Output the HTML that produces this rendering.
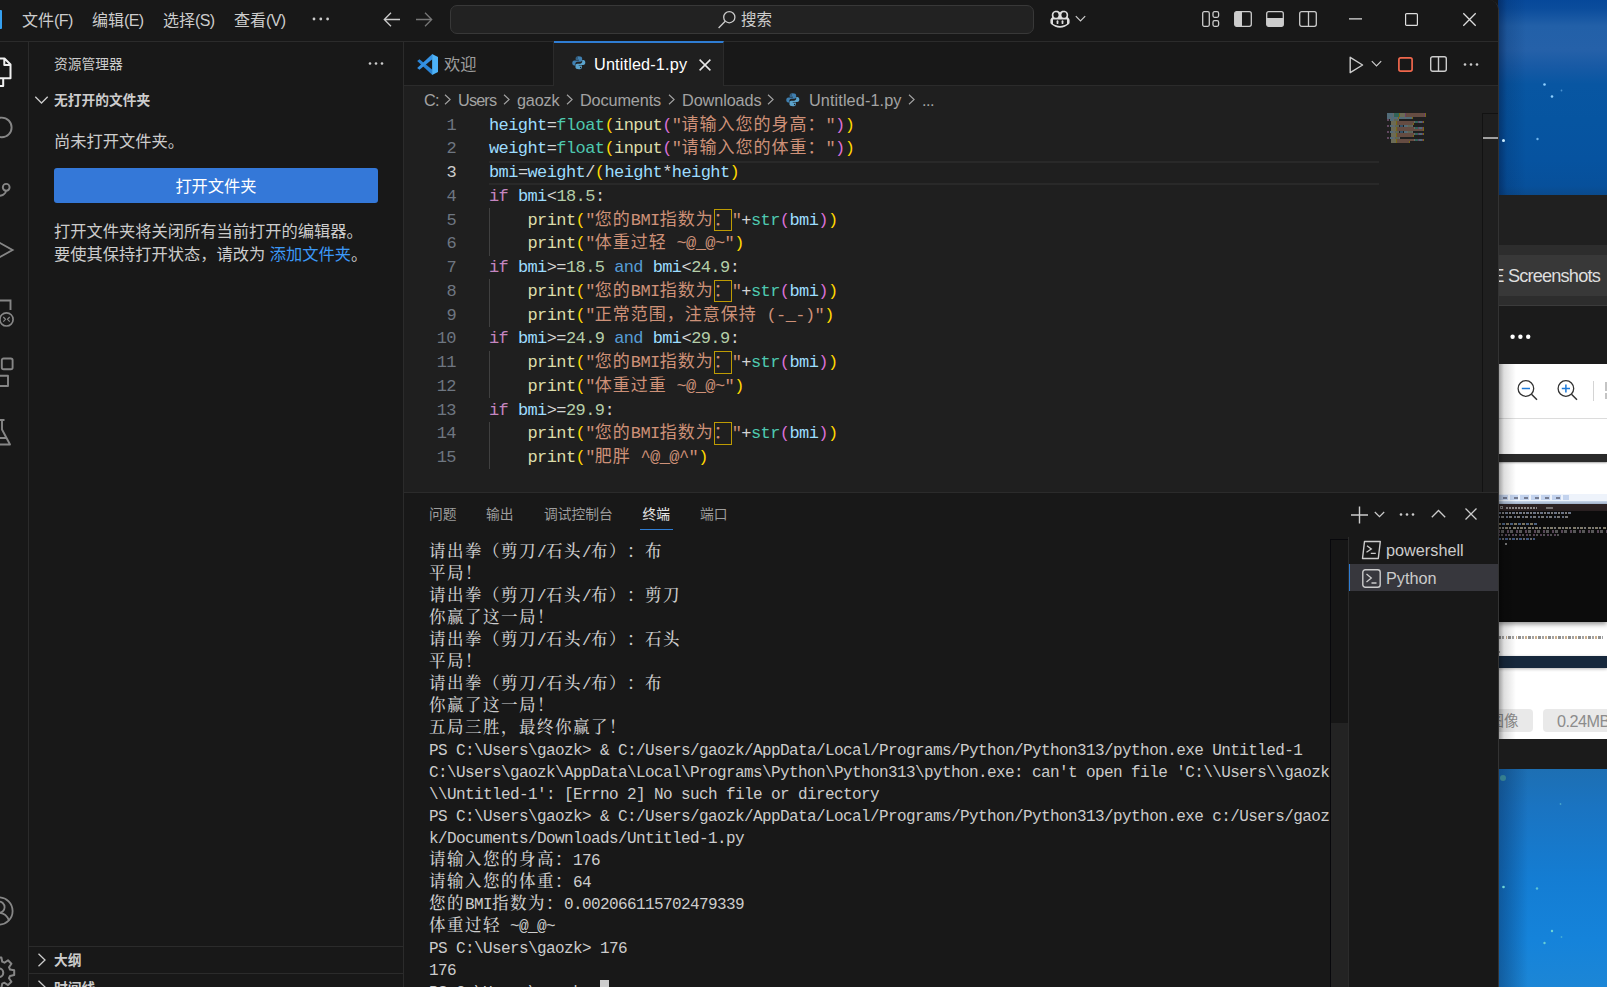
<!DOCTYPE html>
<html lang="zh-CN">
<head>
<meta charset="utf-8">
<title>Untitled-1.py - Visual Studio Code</title>
<style>
*{box-sizing:border-box;margin:0;padding:0}
html,body{width:1607px;height:987px;overflow:hidden;background:#181818}
body{position:relative;font-family:"Liberation Sans","Noto Sans CJK SC",sans-serif;color:#ccc;font-size:16px}
.abs,#win div,#win span.abs,#desk div{position:absolute}
svg{position:absolute;overflow:visible}
/* ---------- desktop / background windows on the right ---------- */
#desk{left:1498px;top:0;width:109px;height:987px;overflow:hidden;background:#0a52a0}
/* ---------- vscode window (page coordinates) ---------- */
#win{left:0;top:0;width:1499px;height:987px;background:#181818;border-top-right-radius:10px;overflow:hidden;border-right:1px solid #333}
#title{left:0;top:0;width:1499px;height:42px;background:#181818;border-bottom:1px solid #2b2b2b}
.menu{top:0;height:41px;line-height:41px;font-size:16px;color:#ccc;white-space:nowrap}
#search{left:450px;top:5px;width:584px;height:29px;border:1px solid #383838;border-radius:7px;background:#222}
#act{left:-31px;top:42px;width:60px;height:960px;background:#181818;border-right:1px solid #2b2b2b}
#side{left:29px;top:42px;width:375px;height:960px;background:#181818;border-right:1px solid #2b2b2b}
#tabs{left:404px;top:42px;width:1095px;height:44px;background:#181818;border-bottom:1px solid #2b2b2b}
#editor{left:404px;top:86px;width:1095px;height:406px;background:#1f1f1f}
#panel{left:404px;top:492px;width:1095px;height:510px;background:#181818;border-top:1px solid #2b2b2b}
.code{font-family:"Liberation Mono","Noto Sans CJK SC",monospace;font-size:17px;letter-spacing:-.58px;line-height:23.75px;white-space:pre;color:#d4d4d4}
.term{font-family:"Liberation Mono","Noto Serif CJK SC",monospace;font-size:16px;letter-spacing:-.6px;line-height:22px;white-space:pre;color:#ccc}
</style>
</head>
<body>
<div id="desk" class="abs">
<!--DESK_BEGIN-->
  <!-- desk is at page x=1498,y=0 (width 109) -->
  <div style="left:0;top:0;width:109px;height:195px;background:linear-gradient(180deg,#06489a 0,#0a4c9c 8px,#2260a8 26px,#2561a9 50px,#185aa5 66px,#0856a2 84px,#0655a1 120px,#0653a0 160px,#07509b 186px,#0a4a8c 195px)"></div>
  <div style="left:0;top:0;width:28px;height:195px;background:linear-gradient(90deg,rgba(3,30,75,.6),rgba(4,40,90,.22) 9px,rgba(4,40,90,0))"></div>
  <svg style="left:0;top:0" width="109" height="195" viewBox="0 0 109 195"><g fill="#8fd0ff"><circle cx="46.500" cy="84.500" r="1.300"/><circle cx="54" cy="96.500" r="1.300"/><circle cx="63.500" cy="90.500" r=".9" opacity=".5"/><circle cx="39.500" cy="139" r="1.200" opacity=".8"/><circle cx="5.500" cy="140.500" r="1.500" fill="#c8ecff"/></g></svg>
  <!-- dark app window (photos) -->
  <div style="left:0;top:195px;width:109px;height:50px;background:#202020"></div>
  <div style="left:0;top:245px;width:109px;height:61px;background:#2d2d2d;border-bottom:1px solid #3b3b3b"></div>
  <div style="left:0;top:254.500px;width:109px;height:41.500px;background:#383838"></div>
  <div style="left:-5.800px;top:254.500px;height:41.500px;line-height:42.500px;font-size:18.200px;letter-spacing:-.75px;color:#dedede;white-space:nowrap">E&nbsp;<span style="letter-spacing:-.82px">Screenshots</span></div>
  <div style="left:0;top:306px;width:109px;height:58px;background:#1b1b1b"></div>
  <svg style="left:12px;top:333.500px" width="22" height="6" viewBox="0 0 22 6"><circle cx="2.600" cy="2.800" r="2.200" fill="#fff"/><circle cx="10.400" cy="2.800" r="2.200" fill="#fff"/><circle cx="18.200" cy="2.800" r="2.200" fill="#fff"/></svg>
  <!-- white viewer -->
  <div style="left:0;top:364px;width:109px;height:375px;background:#fff"></div>
  <svg style="left:18px;top:379px" width="24" height="24" viewBox="0 0 24 24"><circle cx="9.900" cy="9.500" r="7.800" fill="none" stroke="#333" stroke-width="1.300"/><path d="M15.500 15.200L21 20.700" stroke="#333" stroke-width="1.500"/><path d="M5.800 9.500H14" stroke="#1a78d8" stroke-width="1.500"/></svg>
  <svg style="left:58px;top:379px" width="24" height="24" viewBox="0 0 24 24"><circle cx="9.900" cy="9.500" r="7.800" fill="none" stroke="#333" stroke-width="1.300"/><path d="M15.500 15.200L21 20.700" stroke="#333" stroke-width="1.500"/><path d="M5.800 9.500H14M9.900 5.400V13.600" stroke="#1a78d8" stroke-width="1.500"/></svg>
  <div style="left:95px;top:381px;width:1px;height:20px;background:#d4d4d4"></div>
  <div style="left:107px;top:382px;width:2px;height:9px;background:#c4c4c4"></div><div style="left:107px;top:393px;width:2px;height:6px;background:#c4c4c4"></div>
  <div style="left:0;top:418px;width:109px;height:1px;background:#dcdcdc"></div>
  <div style="left:0;top:454px;width:109px;height:7.500px;background:#2a2a2a;box-shadow:0 1px 2px rgba(0,0,0,.35)"></div>
  <!-- embedded screenshot preview -->
  <div style="left:0;top:494px;width:109px;height:6.500px;background:#eef3fb"></div>
  <div style="left:0;top:500.500px;width:109px;height:3.500px;background:linear-gradient(180deg,#c9d6ea,#9fb0c8)"></div>
  <div style="left:0;top:504px;width:109px;height:7px;background:#2c2223"></div>
  <div style="left:0;top:510.500px;width:109px;height:111px;background:#0c0c0c;box-shadow:0 2px 5px rgba(0,0,0,.45)"></div>
<style>.tt{left:0;height:2.500px;opacity:.55}</style>
  <!-- tiny details of the embedded preview -->
  <div style="left:1px;top:494.500px;width:70px;height:5.500px;background:repeating-linear-gradient(90deg,#c3d3ee 0,#c3d3ee 8.600px,#eef3fb 8.600px,#eef3fb 10.600px)"></div>
  <div style="left:3px;top:496.500px;width:66px;height:2px;opacity:.55;background:repeating-linear-gradient(90deg,rgba(0,0,0,0) 0,rgba(0,0,0,0) 2px,#334 2px,#334 6px,rgba(0,0,0,0) 6px,rgba(0,0,0,0) 10.600px)"></div>
  <div style="left:2px;top:505.500px;width:3px;height:3.500px;border:1px solid #999;opacity:.8"></div>
  <div style="left:8px;top:506.500px;width:31px;height:2px;opacity:.55;background:repeating-linear-gradient(90deg,#ddd 0,#ddd 2px,rgba(0,0,0,0) 2px,rgba(0,0,0,0) 3px)"></div>
  <div style="left:48px;top:506.500px;width:7px;height:2px;opacity:.45;background:#ccc"></div>
  <div class="tt" style="top:511.500px;width:74px;background:repeating-linear-gradient(90deg,#b9c8e8 0,#b9c8e8 3px,rgba(0,0,0,0) 3px,rgba(0,0,0,0) 4px,#d8d8d8 4px,#d8d8d8 6px,rgba(0,0,0,0) 6px,rgba(0,0,0,0) 7px)"></div>
  <div class="tt" style="top:515.500px;width:72px;background:repeating-linear-gradient(90deg,#aab8d8 0,#aab8d8 2px,rgba(0,0,0,0) 2px,rgba(0,0,0,0) 3.500px,#ccc 3.500px,#ccc 6px,rgba(0,0,0,0) 6px,rgba(0,0,0,0) 8px)"></div>
  <div class="tt" style="top:522.500px;width:39px;background:repeating-linear-gradient(90deg,#d8c9a0 0,#d8c9a0 3px,rgba(0,0,0,0) 3px,rgba(0,0,0,0) 4px,#7fa6e0 4px,#7fa6e0 7px,rgba(0,0,0,0) 7px,rgba(0,0,0,0) 8px)"></div>
  <div class="tt" style="top:526.500px;width:109px;background:repeating-linear-gradient(90deg,#e0d6b8 0,#e0d6b8 3px,rgba(0,0,0,0) 3px,rgba(0,0,0,0) 4px,#d0d0d0 4px,#d0d0d0 6px,rgba(0,0,0,0) 6px,rgba(0,0,0,0) 7.500px)"></div>
  <div class="tt" style="top:530px;width:109px;opacity:.4;background:repeating-linear-gradient(90deg,#c8a0c8 0,#c8a0c8 2px,rgba(0,0,0,0) 2px,rgba(0,0,0,0) 3px,#c8c8c8 3px,#c8c8c8 6px,rgba(0,0,0,0) 6px,rgba(0,0,0,0) 9px)"></div>
  <div class="tt" style="top:533.500px;width:61px;opacity:.4;background:repeating-linear-gradient(90deg,#c090c0 0,#c090c0 2px,rgba(0,0,0,0) 2px,rgba(0,0,0,0) 3px,#bbb 3px,#bbb 5px,rgba(0,0,0,0) 5px,rgba(0,0,0,0) 7px)"></div>
  <div class="tt" style="top:537.500px;width:37px;background:repeating-linear-gradient(90deg,#6a94dc 0,#6a94dc 3px,rgba(0,0,0,0) 3px,rgba(0,0,0,0) 4px,#b0b0b0 4px,#b0b0b0 6px,rgba(0,0,0,0) 6px,rgba(0,0,0,0) 7px)"></div>
  <div style="left:7px;top:542.500px;width:2px;height:2px;background:#aaa;opacity:.7"></div>
  <div class="tt" style="top:636px;width:105px;height:3px;opacity:.6;background:repeating-linear-gradient(90deg,#444 0,#444 3px,rgba(0,0,0,0) 3px,rgba(0,0,0,0) 4px,#666 4px,#666 6px,rgba(0,0,0,0) 6px,rgba(0,0,0,0) 7.500px,#a87840 7.500px,#a87840 9px,rgba(0,0,0,0) 9px,rgba(0,0,0,0) 10px)"></div>
  <div style="left:0;top:651px;width:2px;height:2px;background:#777;opacity:.7"></div>
  <div style="left:0;top:656px;width:109px;height:12px;background:#16283c;box-shadow:0 1px 3px rgba(0,0,0,.3)"></div>
  <div style="left:-20px;top:708.500px;width:55px;height:23.500px;border-radius:4px;background:#e9e9e9"></div>
  <div style="left:-8.500px;top:708.500px;height:23.500px;line-height:24px;font-size:14.500px;color:#8a8a8a;white-space:nowrap">图像</div>
  <div style="left:45px;top:708.500px;width:90px;height:23.500px;border-radius:4px;background:#e9e9e9"></div>
  <div style="left:59px;top:708.500px;height:23.500px;line-height:24.500px;font-size:16.200px;letter-spacing:-.5px;color:#8c8c8c;white-space:nowrap">0.24MB</div>
  <!-- left shadow of vscode window over the white area -->
  <div style="left:0;top:364px;width:18px;height:375px;background:linear-gradient(90deg,rgba(0,0,0,.42),rgba(0,0,0,.13) 6px,rgba(0,0,0,0) 18px)"></div>
  <div style="left:0;top:739px;width:109px;height:30px;background:#1b1b1b"></div>
  <!-- wallpaper bottom -->
  <div style="left:0;top:769px;width:109px;height:218px;background:linear-gradient(180deg,#1d6fb3 0,#1a74c2 40px,#147dd3 110px,#1583da 170px,#1c86d6 218px)"></div>
  <div style="left:0;top:769px;width:30px;height:218px;background:linear-gradient(90deg,rgba(8,50,100,.5),rgba(8,50,100,0))"></div>
  <svg style="left:0;top:769px" width="109" height="218" viewBox="0 0 109 218"><g fill="#6fd6d6"><circle cx="5.500" cy="118" r="1.300"/><circle cx="39" cy="119.500" r="1.200" opacity=".8"/><circle cx="54" cy="162" r="1.200"/><circle cx="46.500" cy="174" r="1.200" opacity=".9"/><circle cx="63.500" cy="168" r=".9" opacity=".5"/><circle cx="62.500" cy="35" r=".9" opacity=".5"/><circle cx="5" cy="9" r="3" fill="#4c9a8a" opacity=".6"/></g></svg>
<!--DESK_END-->
</div>
<div id="win" class="abs">
  <div id="title">
<!--TITLE_BEGIN-->
    <div style="left:0;top:10px;width:2px;height:19px;background:#35a0f0;border-radius:0 1px 1px 0"></div>
    <div class="menu" style="left:22px">文件<span style="letter-spacing:-.6px">(F)</span></div>
    <div class="menu" style="left:92px">编辑<span style="letter-spacing:-.6px">(E)</span></div>
    <div class="menu" style="left:163px">选择<span style="letter-spacing:-.6px">(S)</span></div>
    <div class="menu" style="left:234px">查看<span style="letter-spacing:-.6px">(V)</span></div>
    <svg style="left:311px;top:16px" width="20" height="6" viewBox="0 0 20 6"><circle cx="3" cy="3" r="1.4" fill="#ccc"/><circle cx="9.8" cy="3" r="1.4" fill="#ccc"/><circle cx="16.6" cy="3" r="1.4" fill="#ccc"/></svg>
    <svg style="left:383px;top:11px" width="18" height="17" viewBox="0 0 18 17"><path d="M17 8.5H1.5M8 1.8L1.3 8.5L8 15.2" fill="none" stroke="#ccc" stroke-width="1.3"/></svg>
    <svg style="left:415px;top:11px" width="18" height="17" viewBox="0 0 18 17"><path d="M1 8.5H16.5M10 1.8L16.7 8.5L10 15.2" fill="none" stroke="#777" stroke-width="1.3"/></svg>
    <div id="search">
      <svg style="left:266px;top:4px" width="20" height="20" viewBox="0 0 20 20"><circle cx="12.3" cy="7.2" r="5.6" fill="none" stroke="#ccc" stroke-width="1.3"/><path d="M8.2 11.3L1.6 18" stroke="#ccc" stroke-width="1.3" fill="none"/></svg>
      <div style="left:290px;top:0;height:27px;line-height:27px;font-size:15.5px;color:#ccc;white-space:nowrap">搜索</div>
    </div>
    <!-- copilot -->
    <svg style="left:1049px;top:9px" width="22" height="20" viewBox="0 0 22 20">
      <path d="M3.2 8.2C2.2 5.6 3 2.6 6.2 1.8c2.2-.5 3.9.1 4.8 1.5.9-1.4 2.600-2 4.800-1.500 3.200.8 4 3.800 3 6.400 1.100.8 1.800 1.900 1.800 3.300v2c0 .7-.3 1.300-.9 1.800-2.300 1.900-5.300 3.400-8.700 3.400s-6.400-1.500-8.700-3.400c-.6-.5-.9-1.100-.9-1.800v-2c0-1.400.7-2.500 1.800-3.300z" fill="#ddd"/>
      <rect x="4.500" y="3.200" width="5" height="5.600" rx="2.200" fill="#181818"/><rect x="12.500" y="3.200" width="5" height="5.600" rx="2.200" fill="#181818"/>
      <path d="M4 10.500h14v4.200c-2 1.400-4.300 2.200-7 2.200s-5-.8-7-2.200z" fill="#181818"/>
      <rect x="7.600" y="11.300" width="1.800" height="3.800" rx=".9" fill="#ddd"/><rect x="12.600" y="11.300" width="1.800" height="3.800" rx=".9" fill="#ddd"/>
    </svg>
    <svg style="left:1075px;top:15px" width="11" height="8" viewBox="0 0 11 8"><path d="M.8 1.200L5.500 6L10.200 1.200" fill="none" stroke="#ccc" stroke-width="1.200"/></svg>
    <!-- layout icons -->
    <svg style="left:1202px;top:11px" width="18" height="17" viewBox="0 0 18 17"><rect x=".7" y=".7" width="6.600" height="14.600" rx="1.500" fill="none" stroke="#ccc" stroke-width="1.300"/><rect x="11" y=".7" width="5.600" height="5.600" rx="1.500" fill="none" stroke="#ccc" stroke-width="1.300"/><rect x="11" y="9.700" width="5.600" height="5.600" rx="1.500" fill="none" stroke="#ccc" stroke-width="1.300"/></svg>
    <svg style="left:1234px;top:11px" width="18" height="17" viewBox="0 0 18 17"><rect x=".7" y=".7" width="16.600" height="14.600" rx="2" fill="none" stroke="#ccc" stroke-width="1.300"/><path d="M.7 2.500a1.800 1.800 0 0 1 1.800-1.800H8v14.600H2.500a1.800 1.800 0 0 1-1.800-1.800z" fill="#ccc"/></svg>
    <svg style="left:1266px;top:11px" width="18" height="17" viewBox="0 0 18 17"><rect x=".7" y=".7" width="16.600" height="14.600" rx="2" fill="none" stroke="#ccc" stroke-width="1.300"/><path d="M.7 7h16.600v6.500a1.800 1.800 0 0 1-1.800 1.800H2.500a1.800 1.800 0 0 1-1.800-1.800z" fill="#ccc"/></svg>
    <svg style="left:1299px;top:11px" width="18" height="17" viewBox="0 0 18 17"><rect x=".7" y=".7" width="16.600" height="14.600" rx="2" fill="none" stroke="#ccc" stroke-width="1.300"/><path d="M9.500 .7v14.600" stroke="#ccc" stroke-width="1.300"/></svg>
    <!-- window controls -->
    <svg style="left:1349px;top:18px" width="13" height="2" viewBox="0 0 13 2"><path d="M0 .8H13" stroke="#ddd" stroke-width="1.200"/></svg>
    <svg style="left:1405px;top:13px" width="13" height="13" viewBox="0 0 13 13"><rect x=".6" y=".6" width="11.800" height="11.800" rx="1" fill="none" stroke="#ddd" stroke-width="1.200"/></svg>
    <svg style="left:1463px;top:13px" width="13" height="13" viewBox="0 0 13 13"><path d="M.3 .3L12.700 12.700M12.700 .3L.3 12.700" stroke="#ddd" stroke-width="1.300"/></svg>
<!--TITLE_END-->
  </div>
  <div id="act">
<!--ACT_BEGIN-->
    <!-- act is at page x=-31,y=42 ; icon centre x = page -1 => local 30 -->
    <!-- files (active) -->
    <svg style="left:15px;top:15px" width="30" height="30" viewBox="0 0 30 30"><path d="M11 1.500h9.500l6 6V21.300H11z M20.300 1.500V8h6.200" fill="none" stroke="#f0f0f0" stroke-width="2" stroke-linejoin="round"/><path d="M11 9H4.500v20h14.700v-7.700" fill="none" stroke="#f0f0f0" stroke-width="2" stroke-linejoin="round"/></svg>
    <!-- search -->
    <svg style="left:15px;top:75px" width="30" height="30" viewBox="0 0 30 30"><circle cx="17.800" cy="10.400" r="9.800" fill="none" stroke="#868686" stroke-width="1.900"/><path d="M10.800 17.500L2 26.500" stroke="#868686" stroke-width="1.900"/></svg>
    <!-- source control -->
    <svg style="left:15px;top:135px" width="30" height="30" viewBox="0 0 30 30"><circle cx="22.200" cy="10.300" r="3.400" fill="none" stroke="#868686" stroke-width="1.900"/><circle cx="8" cy="5.500" r="3.400" fill="none" stroke="#868686" stroke-width="1.900"/><circle cx="8" cy="24.500" r="3.400" fill="none" stroke="#868686" stroke-width="1.900"/><path d="M8 9v12M22 13.700c0 4.500-6 5-14 7.500" fill="none" stroke="#868686" stroke-width="1.900"/></svg>
    <!-- run and debug -->
    <svg style="left:15px;top:195px" width="30" height="30" viewBox="0 0 30 30"><path d="M11.500 3.500L28.500 13L11.500 22.500" fill="none" stroke="#868686" stroke-width="1.900"/><circle cx="8" cy="21" r="5" fill="none" stroke="#868686" stroke-width="1.900"/></svg>
    <!-- remote explorer -->
    <svg style="left:15px;top:255px" width="30" height="30" viewBox="0 0 30 30"><path d="M3 21V3.500h23.500V13" fill="none" stroke="#868686" stroke-width="1.900"/><circle cx="22.500" cy="22.400" r="6.600" fill="none" stroke="#868686" stroke-width="1.700"/><path d="M19.300 20l2.200 2.300l-2.200 2.300M25.700 20l-2.200 2.300l2.200 2.300" fill="none" stroke="#868686" stroke-width="1.200"/></svg>
    <!-- extensions -->
    <svg style="left:15px;top:315px" width="30" height="30" viewBox="0 0 30 30"><rect x="17.800" y="1.500" width="10.800" height="10.800" rx="1.800" fill="none" stroke="#868686" stroke-width="1.900"/><path d="M13 6.500H3.500v11.200M13 17.700H3.500v11.300H24V18.700H13z" fill="none" stroke="#868686" stroke-width="1.900" stroke-linejoin="round"/></svg>
    <!-- testing -->
    <svg style="left:15px;top:375px" width="30" height="30" viewBox="0 0 30 30"><path d="M9.500 3h11M12 3v9.500L4 27.500h22L18 12.500V3M7.500 21h15" fill="none" stroke="#868686" stroke-width="1.900" stroke-linejoin="round"/></svg>
    <!-- account -->
    <svg style="left:15px;top:854px" width="30" height="30" viewBox="0 0 30 30"><circle cx="15" cy="15" r="13.600" fill="none" stroke="#868686" stroke-width="1.800"/><circle cx="15" cy="11.200" r="5.600" fill="none" stroke="#868686" stroke-width="1.800"/><path d="M5 24.500c2-5 5.500-7.600 10-7.600s8 2.600 10 7.600" fill="none" stroke="#868686" stroke-width="1.800"/></svg>
    <!-- gear -->
    <svg style="left:15px;top:914px" width="30" height="30" viewBox="0 0 30 30"><g fill="none" stroke="#868686" stroke-width="2" stroke-linejoin="round"><path d="M12.600 1.500h4.800l.8 4.200 2.300 1 3.500-2.400 3.400 3.400-2.400 3.500 1 2.300 4.200.8v4.800l-4.200.8-1 2.300 2.400 3.500-3.400 3.400-3.500-2.400-2.300 1-.8 4.200h-4.800l-.8-4.200-2.300-1-3.500 2.400-3.400-3.400 2.400-3.500-1-2.300-4.200-.8v-4.800l4.200-.8 1-2.300L2.600 7.700l3.400-3.400 3.500 2.400 2.300-1z"/><circle cx="15" cy="16.700" r="4.300"/></g></svg>
<!--ACT_END-->
  </div>
  <div id="side">
<!--SIDE_BEGIN-->
    <!-- side is at page x=29,y=42 -->
    <div style="left:25px;top:12px;height:22px;line-height:22px;font-size:13.75px;color:#ccc;white-space:nowrap">资源管理器</div>
    <svg style="left:339px;top:19px" width="16" height="5" viewBox="0 0 16 5"><circle cx="2" cy="2.500" r="1.300" fill="#ccc"/><circle cx="8" cy="2.500" r="1.300" fill="#ccc"/><circle cx="14" cy="2.500" r="1.300" fill="#ccc"/></svg>
    <svg style="left:5px;top:53px" width="15" height="10" viewBox="0 0 15 10"><path d="M1.300 1.700L7.500 8L13.700 1.700" fill="none" stroke="#ccc" stroke-width="1.300"/></svg>
    <div style="left:25px;top:47.800px;height:22px;line-height:22px;font-size:13.75px;font-weight:bold;color:#ccc;white-space:nowrap">无打开的文件夹</div>
    <div style="left:25px;top:88px;height:23px;line-height:23px;font-size:16.25px;color:#ccc;white-space:nowrap">尚未打开文件夹。</div>
    <div style="left:25px;top:126px;width:324px;height:35px;line-height:36.500px;background:#3478d8;border-radius:3px;color:#fff;font-size:16.25px;text-align:center">打开文件夹</div>
    <div style="left:25px;top:178px;width:340px;line-height:23.2px;font-size:16.25px;color:#ccc;white-space:nowrap">打开文件夹将关闭所有当前打开的编辑器。<br>要使其保持打开状态，请改为 <span style="color:#3c98f7">添加文件夹</span>。</div>
    <!-- collapsed panes -->
    <div style="left:0;top:904px;width:374px;height:1px;background:#2b2b2b"></div>
    <svg style="left:8px;top:911px" width="10" height="14" viewBox="0 0 10 14"><path d="M1.500 .8L8 7L1.500 13.200" fill="none" stroke="#ccc" stroke-width="1.300"/></svg>
    <div style="left:25px;top:908px;height:22px;line-height:22px;font-size:13.75px;font-weight:bold;color:#ccc;white-space:nowrap">大纲</div>
    <div style="left:0;top:931px;width:374px;height:1px;background:#2b2b2b"></div>
    <svg style="left:8px;top:938px" width="10" height="14" viewBox="0 0 10 14"><path d="M1.500 .8L8 7L1.500 13.200" fill="none" stroke="#ccc" stroke-width="1.300"/></svg>
    <div style="left:25px;top:935.500px;height:22px;line-height:22px;font-size:13.75px;font-weight:bold;color:#ccc;white-space:nowrap">时间线</div>
<!--SIDE_END-->
  </div>
  <div id="tabs">
<!--TABS_BEGIN-->
    <!-- tabs is at page x=404,y=42 -->
    <div style="left:0;top:0;width:150px;height:43px;border-right:1px solid #2b2b2b"></div>
    <svg style="left:12.700px;top:11.900px" width="21" height="21" viewBox="0 0 20.400 20.200"><polygon points="0.200,6.700 2.400,4.900 14.900,15.300 14.900,20.200" fill="#2a84d6"/><polygon points="0.200,13.500 2.400,15.300 14.900,4.900 14.900,0" fill="#3592e4"/><polygon points="14.700,0 20.400,2.700 20.400,17.500 14.700,20.200" fill="#4db2f8"/></svg>
    <div style="left:40px;top:0;height:43px;line-height:45px;font-size:16.250px;color:#9d9d9d;white-space:nowrap">欢迎</div>
    <div style="left:150px;top:-1px;width:170px;height:45px;background:#1f1f1f;border-top:2px solid #2f7dd3;border-right:1px solid #2b2b2b"></div>
    <!-- python file icon -->
    <svg style="left:167.600px;top:14px" width="13.600" height="13.400" viewBox="0 0 16 16"><path d="M7.900 .3C5.600 .3 4.300 1.100 4.300 2.700v1.900h3.800v.7H2.700C1.100 5.300 .2 6.500 .2 8.300s.9 3 2.300 3h1.400V9.400c0-1.500 1.200-2.600 2.700-2.600h3.300c1.200 0 2.100-.9 2.100-2.100V2.700c0-1.500-1.400-2.400-4.100-2.400zM5.900 1.500c.5 0 .8.400.8.800s-.3.800-.8.800-.8-.4-.8-.8.300-.8.800-.8z" fill="#3f7fb0"/><path d="M8.100 15.700c2.300 0 3.600-.8 3.600-2.400v-1.900H7.900v-.7h5.400c1.600 0 2.500-1.200 2.500-3s-.9-3-2.300-3h-1.400v1.900c0 1.500-1.200 2.600-2.700 2.600H6.100c-1.200 0-2.100.9-2.100 2.100v2c0 1.500 1.400 2.400 4.100 2.400zm2-1.200c-.5 0-.8-.4-.8-.8s.3-.8.800-.8.800.4.800.8-.3.800-.8.800z" fill="#5ba3cc"/></svg>
    <div style="left:190px;top:0;height:44px;line-height:45px;font-size:16.250px;letter-spacing:.15px;color:#fff;white-space:nowrap">Untitled-1.py</div>
    <svg style="left:295px;top:16.500px" width="12" height="12" viewBox="0 0 12 12"><path d="M.6 .6L11.400 11.400M11.400 .6L.6 11.400" stroke="#e8e8e8" stroke-width="1.500"/></svg>
    <!-- editor actions -->
    <svg style="left:945px;top:13.500px" width="15" height="18" viewBox="0 0 15 18"><path d="M1.200 1.300L13.600 9L1.200 16.700z" fill="none" stroke="#ccc" stroke-width="1.400" stroke-linejoin="round"/></svg>
    <svg style="left:967px;top:18px" width="11" height="8" viewBox="0 0 11 8"><path d="M.8 1.200L5.500 6L10.200 1.200" fill="none" stroke="#ccc" stroke-width="1.200"/></svg>
    <svg style="left:994px;top:14.500px" width="15" height="15" viewBox="0 0 15 15"><rect x=".9" y=".9" width="13.200" height="13.200" rx="1.800" fill="none" stroke="#f0674c" stroke-width="1.700"/></svg>
    <svg style="left:1026px;top:13.500px" width="17" height="16" viewBox="0 0 17 16"><rect x=".7" y=".7" width="15.600" height="14.600" rx="2" fill="none" stroke="#ccc" stroke-width="1.400"/><path d="M8.500 .7v14.600" stroke="#ccc" stroke-width="1.400"/></svg>
    <svg style="left:1059px;top:19.500px" width="16" height="5" viewBox="0 0 16 5"><circle cx="2" cy="2.500" r="1.300" fill="#ccc"/><circle cx="8" cy="2.500" r="1.300" fill="#ccc"/><circle cx="14" cy="2.500" r="1.300" fill="#ccc"/></svg>
<!--TABS_END-->
  </div>
  <div id="editor">
<!--EDITOR_BEGIN-->
    <style>.c{font-family:"Noto Sans CJK SC",sans-serif;font-size:17px;letter-spacing:1px;line-height:0;text-spacing-trim:space-all;font-kerning:none;font-feature-settings:"halt" 0,"palt" 0,"kern" 0}.ln{left:0;width:52px;text-align:right;color:#6e7681;height:23.75px;margin-top:.7px}.cl{left:85px;height:23.75px;margin-top:.7px}.box{left:309.7px;width:18px;height:22.5px;border:1px solid #bd9b03}.ig{width:1px;background:#404040;left:85px}#mm i{position:absolute;height:2px;display:block}</style>
    <style>.bc{top:0;height:27px;line-height:28.5px;font-size:16.250px;color:#a3a3a3;white-space:nowrap}.bcs{top:8.300px}</style>
    <div class="bc" style="left:20px;letter-spacing:-.8px">C:</div>
    <svg class="bcs" style="left:39.7px" width="7.500" height="11" viewBox="0 0 8 12"><path d="M1 .8L6.600 6L1 11.200" fill="none" stroke="#a3a3a3" stroke-width="1.200"/></svg>
    <div class="bc" style="left:54px;letter-spacing:-.85px">Users</div>
    <svg class="bcs" style="left:98.7px" width="7.500" height="11" viewBox="0 0 8 12"><path d="M1 .8L6.600 6L1 11.200" fill="none" stroke="#a3a3a3" stroke-width="1.200"/></svg>
    <div class="bc" style="left:113px;letter-spacing:-.2px">gaozk</div>
    <svg class="bcs" style="left:161.7px" width="7.500" height="11" viewBox="0 0 8 12"><path d="M1 .8L6.600 6L1 11.200" fill="none" stroke="#a3a3a3" stroke-width="1.200"/></svg>
    <div class="bc" style="left:176px;letter-spacing:-.13px">Documents</div>
    <svg class="bcs" style="left:263.7px" width="7.500" height="11" viewBox="0 0 8 12"><path d="M1 .8L6.600 6L1 11.200" fill="none" stroke="#a3a3a3" stroke-width="1.200"/></svg>
    <div class="bc" style="left:278px;letter-spacing:-.1px">Downloads</div>
    <svg class="bcs" style="left:363.2px" width="7.500" height="11" viewBox="0 0 8 12"><path d="M1 .8L6.600 6L1 11.200" fill="none" stroke="#a3a3a3" stroke-width="1.200"/></svg>
    <svg style="left:382.400px;top:6.500px" width="13.600" height="13.400" viewBox="0 0 16 16"><path d="M7.900 .3C5.600 .3 4.300 1.100 4.300 2.700v1.900h3.800v.7H2.700C1.100 5.300 .2 6.500 .2 8.300s.9 3 2.300 3h1.400V9.400c0-1.500 1.200-2.600 2.700-2.600h3.300c1.200 0 2.100-.9 2.100-2.100V2.700c0-1.500-1.400-2.400-4.100-2.400zM5.900 1.500c.5 0 .8.400.8.800s-.3.800-.8.800-.8-.4-.8-.8.300-.8.800-.8z" fill="#3f7fb0"/><path d="M8.100 15.700c2.300 0 3.600-.8 3.600-2.400v-1.900H7.900v-.7h5.400c1.600 0 2.500-1.200 2.500-3s-.9-3-2.300-3h-1.400v1.900c0 1.500-1.200 2.600-2.700 2.600H6.100c-1.200 0-2.100.9-2.100 2.100v2c0 1.500 1.400 2.400 4.100 2.400zm2-1.200c-.5 0-.8-.4-.8-.8s.3-.8.800-.8.800.4.800.8-.3.800-.8.800z" fill="#5ba3cc"/></svg>
    <div class="bc" style="left:405px;letter-spacing:.1px">Untitled-1.py</div>
    <svg class="bcs" style="left:504.2px" width="7.500" height="11" viewBox="0 0 8 12"><path d="M1 .8L6.600 6L1 11.200" fill="none" stroke="#a3a3a3" stroke-width="1.200"/></svg>
    <div class="bc" style="left:518px;letter-spacing:-.5px">...</div>

    <div style="left:85px;top:75.00px;width:890px;height:23.5px;border-top:2px solid #292929;border-bottom:2px solid #292929"></div>
    <div class="ig" style="top:122.00px;height:47.50px"></div>
    <div class="ig" style="top:193.25px;height:47.50px"></div>
    <div class="ig" style="top:264.50px;height:47.50px"></div>
    <div class="ig" style="top:335.75px;height:47.50px"></div>
    <div class="code ln" style="top:27.00px;color:#6e7681">1</div>
    <div class="code cl" style="top:27.00px"><span style="color:#9cdcfe">height</span><span style="color:#d4d4d4">=</span><span style="color:#4ec9b0">float</span><span style="color:#ffd700">(</span><span style="color:#dcdcaa">input</span><span style="color:#da70d6">(</span><span style="color:#ce9178">"<span class="c">请输入您的身高：</span>"</span><span style="color:#da70d6">)</span><span style="color:#ffd700">)</span></div>
    <div class="code ln" style="top:50.75px;color:#6e7681">2</div>
    <div class="code cl" style="top:50.75px"><span style="color:#9cdcfe">weight</span><span style="color:#d4d4d4">=</span><span style="color:#4ec9b0">float</span><span style="color:#ffd700">(</span><span style="color:#dcdcaa">input</span><span style="color:#da70d6">(</span><span style="color:#ce9178">"<span class="c">请输入您的体重：</span>"</span><span style="color:#da70d6">)</span><span style="color:#ffd700">)</span></div>
    <div class="code ln" style="top:74.50px;color:#ccc">3</div>
    <div class="code cl" style="top:74.50px"><span style="color:#9cdcfe">bmi</span><span style="color:#d4d4d4">=</span><span style="color:#9cdcfe">weight</span><span style="color:#d4d4d4">/</span><span style="color:#ffd700">(</span><span style="color:#9cdcfe">height</span><span style="color:#d4d4d4">*</span><span style="color:#9cdcfe">height</span><span style="color:#ffd700">)</span></div>
    <div class="code ln" style="top:98.25px;color:#6e7681">4</div>
    <div class="code cl" style="top:98.25px"><span style="color:#c586c0">if</span> <span style="color:#9cdcfe">bmi</span><span style="color:#d4d4d4">&lt;</span><span style="color:#b5cea8">18.5</span><span style="color:#d4d4d4">:</span></div>
    <div class="code ln" style="top:122.00px;color:#6e7681">5</div>
    <div class="box" style="top:122.60px"></div>
    <div class="code cl" style="top:122.00px">    <span style="color:#dcdcaa">print</span><span style="color:#ffd700">(</span><span style="color:#ce9178">"<span class="c">您的</span>BMI<span class="c">指数为</span></span><span style="color:#ce9178"><span class="c">：</span></span><span style="color:#ce9178">"</span><span style="color:#d4d4d4">+</span><span style="color:#4ec9b0">str</span><span style="color:#da70d6">(</span><span style="color:#9cdcfe">bmi</span><span style="color:#da70d6">)</span><span style="color:#ffd700">)</span></div>
    <div class="code ln" style="top:145.75px;color:#6e7681">6</div>
    <div class="code cl" style="top:145.75px">    <span style="color:#dcdcaa">print</span><span style="color:#ffd700">(</span><span style="color:#ce9178">"<span class="c">体重过轻</span> ~@_@~"</span><span style="color:#ffd700">)</span></div>
    <div class="code ln" style="top:169.50px;color:#6e7681">7</div>
    <div class="code cl" style="top:169.50px"><span style="color:#c586c0">if</span> <span style="color:#9cdcfe">bmi</span><span style="color:#d4d4d4">&gt;=</span><span style="color:#b5cea8">18.5</span> <span style="color:#569cd6">and</span> <span style="color:#9cdcfe">bmi</span><span style="color:#d4d4d4">&lt;</span><span style="color:#b5cea8">24.9</span><span style="color:#d4d4d4">:</span></div>
    <div class="code ln" style="top:193.25px;color:#6e7681">8</div>
    <div class="box" style="top:193.85px"></div>
    <div class="code cl" style="top:193.25px">    <span style="color:#dcdcaa">print</span><span style="color:#ffd700">(</span><span style="color:#ce9178">"<span class="c">您的</span>BMI<span class="c">指数为</span></span><span style="color:#ce9178"><span class="c">：</span></span><span style="color:#ce9178">"</span><span style="color:#d4d4d4">+</span><span style="color:#4ec9b0">str</span><span style="color:#da70d6">(</span><span style="color:#9cdcfe">bmi</span><span style="color:#da70d6">)</span><span style="color:#ffd700">)</span></div>
    <div class="code ln" style="top:217.00px;color:#6e7681">9</div>
    <div class="code cl" style="top:217.00px">    <span style="color:#dcdcaa">print</span><span style="color:#ffd700">(</span><span style="color:#ce9178">"<span class="c">正常范围，注意保持</span> (-_-)"</span><span style="color:#ffd700">)</span></div>
    <div class="code ln" style="top:240.75px;color:#6e7681">10</div>
    <div class="code cl" style="top:240.75px"><span style="color:#c586c0">if</span> <span style="color:#9cdcfe">bmi</span><span style="color:#d4d4d4">&gt;=</span><span style="color:#b5cea8">24.9</span> <span style="color:#569cd6">and</span> <span style="color:#9cdcfe">bmi</span><span style="color:#d4d4d4">&lt;</span><span style="color:#b5cea8">29.9</span><span style="color:#d4d4d4">:</span></div>
    <div class="code ln" style="top:264.50px;color:#6e7681">11</div>
    <div class="box" style="top:265.10px"></div>
    <div class="code cl" style="top:264.50px">    <span style="color:#dcdcaa">print</span><span style="color:#ffd700">(</span><span style="color:#ce9178">"<span class="c">您的</span>BMI<span class="c">指数为</span></span><span style="color:#ce9178"><span class="c">：</span></span><span style="color:#ce9178">"</span><span style="color:#d4d4d4">+</span><span style="color:#4ec9b0">str</span><span style="color:#da70d6">(</span><span style="color:#9cdcfe">bmi</span><span style="color:#da70d6">)</span><span style="color:#ffd700">)</span></div>
    <div class="code ln" style="top:288.25px;color:#6e7681">12</div>
    <div class="code cl" style="top:288.25px">    <span style="color:#dcdcaa">print</span><span style="color:#ffd700">(</span><span style="color:#ce9178">"<span class="c">体重过重</span> ~@_@~"</span><span style="color:#ffd700">)</span></div>
    <div class="code ln" style="top:312.00px;color:#6e7681">13</div>
    <div class="code cl" style="top:312.00px"><span style="color:#c586c0">if</span> <span style="color:#9cdcfe">bmi</span><span style="color:#d4d4d4">&gt;=</span><span style="color:#b5cea8">29.9</span><span style="color:#d4d4d4">:</span></div>
    <div class="code ln" style="top:335.75px;color:#6e7681">14</div>
    <div class="box" style="top:336.35px"></div>
    <div class="code cl" style="top:335.75px">    <span style="color:#dcdcaa">print</span><span style="color:#ffd700">(</span><span style="color:#ce9178">"<span class="c">您的</span>BMI<span class="c">指数为</span></span><span style="color:#ce9178"><span class="c">：</span></span><span style="color:#ce9178">"</span><span style="color:#d4d4d4">+</span><span style="color:#4ec9b0">str</span><span style="color:#da70d6">(</span><span style="color:#9cdcfe">bmi</span><span style="color:#da70d6">)</span><span style="color:#ffd700">)</span></div>
    <div class="code ln" style="top:359.50px;color:#6e7681">15</div>
    <div class="code cl" style="top:359.50px">    <span style="color:#dcdcaa">print</span><span style="color:#ffd700">(</span><span style="color:#ce9178">"<span class="c">肥胖</span> ^@_@^"</span><span style="color:#ffd700">)</span></div>
    <div id="mm" style="left:982px;top:27px;width:45px;height:30px;opacity:.4"><i style="left:1px;top:0px;width:6px;background:#9cdcfe"></i><i style="left:7px;top:0px;width:1px;background:#d4d4d4"></i><i style="left:8px;top:0px;width:5px;background:#4ec9b0"></i><i style="left:13px;top:0px;width:1px;background:#ffd700"></i><i style="left:14px;top:0px;width:5px;background:#dcdcaa"></i><i style="left:19px;top:0px;width:1px;background:#da70d6"></i><i style="left:20px;top:0px;width:18px;background:#ce9178"></i><i style="left:38px;top:0px;width:1px;background:#da70d6"></i><i style="left:39px;top:0px;width:1px;background:#ffd700"></i><i style="left:1px;top:2px;width:6px;background:#9cdcfe"></i><i style="left:7px;top:2px;width:1px;background:#d4d4d4"></i><i style="left:8px;top:2px;width:5px;background:#4ec9b0"></i><i style="left:13px;top:2px;width:1px;background:#ffd700"></i><i style="left:14px;top:2px;width:5px;background:#dcdcaa"></i><i style="left:19px;top:2px;width:1px;background:#da70d6"></i><i style="left:20px;top:2px;width:18px;background:#ce9178"></i><i style="left:38px;top:2px;width:1px;background:#da70d6"></i><i style="left:39px;top:2px;width:1px;background:#ffd700"></i><i style="left:1px;top:4px;width:3px;background:#9cdcfe"></i><i style="left:4px;top:4px;width:1px;background:#d4d4d4"></i><i style="left:5px;top:4px;width:6px;background:#9cdcfe"></i><i style="left:11px;top:4px;width:1px;background:#d4d4d4"></i><i style="left:12px;top:4px;width:1px;background:#ffd700"></i><i style="left:13px;top:4px;width:6px;background:#9cdcfe"></i><i style="left:19px;top:4px;width:1px;background:#d4d4d4"></i><i style="left:20px;top:4px;width:6px;background:#9cdcfe"></i><i style="left:26px;top:4px;width:1px;background:#ffd700"></i><i style="left:1px;top:6px;width:2px;background:#c586c0"></i><i style="left:4px;top:6px;width:3px;background:#9cdcfe"></i><i style="left:7px;top:6px;width:1px;background:#d4d4d4"></i><i style="left:8px;top:6px;width:4px;background:#b5cea8"></i><i style="left:12px;top:6px;width:1px;background:#d4d4d4"></i><i style="left:5px;top:8px;width:5px;background:#dcdcaa"></i><i style="left:10px;top:8px;width:1px;background:#ffd700"></i><i style="left:11px;top:8px;width:14px;background:#ce9178"></i><i style="left:25px;top:8px;width:2px;background:#ce9178"></i><i style="left:27px;top:8px;width:1px;background:#ce9178"></i><i style="left:28px;top:8px;width:1px;background:#d4d4d4"></i><i style="left:29px;top:8px;width:3px;background:#4ec9b0"></i><i style="left:32px;top:8px;width:1px;background:#da70d6"></i><i style="left:33px;top:8px;width:3px;background:#9cdcfe"></i><i style="left:36px;top:8px;width:1px;background:#da70d6"></i><i style="left:37px;top:8px;width:1px;background:#ffd700"></i><i style="left:5px;top:10px;width:5px;background:#dcdcaa"></i><i style="left:10px;top:10px;width:1px;background:#ffd700"></i><i style="left:11px;top:10px;width:16px;background:#ce9178"></i><i style="left:27px;top:10px;width:1px;background:#ffd700"></i><i style="left:1px;top:12px;width:2px;background:#c586c0"></i><i style="left:4px;top:12px;width:3px;background:#9cdcfe"></i><i style="left:7px;top:12px;width:2px;background:#d4d4d4"></i><i style="left:9px;top:12px;width:4px;background:#b5cea8"></i><i style="left:14px;top:12px;width:3px;background:#569cd6"></i><i style="left:18px;top:12px;width:3px;background:#9cdcfe"></i><i style="left:21px;top:12px;width:1px;background:#d4d4d4"></i><i style="left:22px;top:12px;width:4px;background:#b5cea8"></i><i style="left:26px;top:12px;width:1px;background:#d4d4d4"></i><i style="left:5px;top:14px;width:5px;background:#dcdcaa"></i><i style="left:10px;top:14px;width:1px;background:#ffd700"></i><i style="left:11px;top:14px;width:14px;background:#ce9178"></i><i style="left:25px;top:14px;width:2px;background:#ce9178"></i><i style="left:27px;top:14px;width:1px;background:#ce9178"></i><i style="left:28px;top:14px;width:1px;background:#d4d4d4"></i><i style="left:29px;top:14px;width:3px;background:#4ec9b0"></i><i style="left:32px;top:14px;width:1px;background:#da70d6"></i><i style="left:33px;top:14px;width:3px;background:#9cdcfe"></i><i style="left:36px;top:14px;width:1px;background:#da70d6"></i><i style="left:37px;top:14px;width:1px;background:#ffd700"></i><i style="left:5px;top:16px;width:5px;background:#dcdcaa"></i><i style="left:10px;top:16px;width:1px;background:#ffd700"></i><i style="left:11px;top:16px;width:26px;background:#ce9178"></i><i style="left:37px;top:16px;width:1px;background:#ffd700"></i><i style="left:1px;top:18px;width:2px;background:#c586c0"></i><i style="left:4px;top:18px;width:3px;background:#9cdcfe"></i><i style="left:7px;top:18px;width:2px;background:#d4d4d4"></i><i style="left:9px;top:18px;width:4px;background:#b5cea8"></i><i style="left:14px;top:18px;width:3px;background:#569cd6"></i><i style="left:18px;top:18px;width:3px;background:#9cdcfe"></i><i style="left:21px;top:18px;width:1px;background:#d4d4d4"></i><i style="left:22px;top:18px;width:4px;background:#b5cea8"></i><i style="left:26px;top:18px;width:1px;background:#d4d4d4"></i><i style="left:5px;top:20px;width:5px;background:#dcdcaa"></i><i style="left:10px;top:20px;width:1px;background:#ffd700"></i><i style="left:11px;top:20px;width:14px;background:#ce9178"></i><i style="left:25px;top:20px;width:2px;background:#ce9178"></i><i style="left:27px;top:20px;width:1px;background:#ce9178"></i><i style="left:28px;top:20px;width:1px;background:#d4d4d4"></i><i style="left:29px;top:20px;width:3px;background:#4ec9b0"></i><i style="left:32px;top:20px;width:1px;background:#da70d6"></i><i style="left:33px;top:20px;width:3px;background:#9cdcfe"></i><i style="left:36px;top:20px;width:1px;background:#da70d6"></i><i style="left:37px;top:20px;width:1px;background:#ffd700"></i><i style="left:5px;top:22px;width:5px;background:#dcdcaa"></i><i style="left:10px;top:22px;width:1px;background:#ffd700"></i><i style="left:11px;top:22px;width:16px;background:#ce9178"></i><i style="left:27px;top:22px;width:1px;background:#ffd700"></i><i style="left:1px;top:24px;width:2px;background:#c586c0"></i><i style="left:4px;top:24px;width:3px;background:#9cdcfe"></i><i style="left:7px;top:24px;width:2px;background:#d4d4d4"></i><i style="left:9px;top:24px;width:4px;background:#b5cea8"></i><i style="left:13px;top:24px;width:1px;background:#d4d4d4"></i><i style="left:5px;top:26px;width:5px;background:#dcdcaa"></i><i style="left:10px;top:26px;width:1px;background:#ffd700"></i><i style="left:11px;top:26px;width:14px;background:#ce9178"></i><i style="left:25px;top:26px;width:2px;background:#ce9178"></i><i style="left:27px;top:26px;width:1px;background:#ce9178"></i><i style="left:28px;top:26px;width:1px;background:#d4d4d4"></i><i style="left:29px;top:26px;width:3px;background:#4ec9b0"></i><i style="left:32px;top:26px;width:1px;background:#da70d6"></i><i style="left:33px;top:26px;width:3px;background:#9cdcfe"></i><i style="left:36px;top:26px;width:1px;background:#da70d6"></i><i style="left:37px;top:26px;width:1px;background:#ffd700"></i><i style="left:5px;top:28px;width:5px;background:#dcdcaa"></i><i style="left:10px;top:28px;width:1px;background:#ffd700"></i><i style="left:11px;top:28px;width:12px;background:#ce9178"></i><i style="left:23px;top:28px;width:1px;background:#ffd700"></i></div>
    <div style="left:1078px;top:27px;width:17px;height:380px;border-left:1px solid #121212;border-top:1px solid #121212"></div>
    <div style="left:1079px;top:51px;width:16px;height:2px;background:#a0a0a0"></div>
<!--EDITOR_END-->
  </div>
  <div id="panel">
<!--PANEL_BEGIN-->
    <style>.pt{top:11px;height:22px;line-height:22px;font-size:13.75px;color:#9d9d9d;white-space:nowrap}.tc{font-family:"Noto Serif CJK SC",serif;font-weight:500;font-size:16.5px;letter-spacing:1.5px;line-height:0;text-spacing-trim:space-all;font-kerning:none;font-feature-settings:"halt" 0,"palt" 0,"kern" 0}.tl{left:25px;height:22px}</style>
    <div class="pt" style="left:25px">问题</div>
    <div class="pt" style="left:82px">输出</div>
    <div class="pt" style="left:140px">调试控制台</div>
    <div class="pt" style="left:238.5px;color:#e7e7e7">终端</div>
    <div class="pt" style="left:296px">端口</div>
    <div style="left:236px;top:36px;width:33px;height:1.250px;background:#2f7dd3"></div>
    <svg style="left:947px;top:12.600px" width="17" height="18" viewBox="0 0 17 18"><path d="M8.500 .5v17M0 9h17" stroke="#ccc" stroke-width="1.400" fill="none"/></svg>
    <svg style="left:969.500px;top:18.100px" width="11" height="7" viewBox="0 0 11 7"><path d="M.8 1L5.500 5.700L10.200 1" fill="none" stroke="#ccc" stroke-width="1.200"/></svg>
    <svg style="left:995px;top:19.100px" width="16" height="5" viewBox="0 0 16 5"><circle cx="2" cy="2.500" r="1.300" fill="#ccc"/><circle cx="8" cy="2.500" r="1.300" fill="#ccc"/><circle cx="14" cy="2.500" r="1.300" fill="#ccc"/></svg>
    <svg style="left:1026.500px;top:16.100px" width="15" height="9" viewBox="0 0 15 9"><path d="M.8 8.200L7.500 1.500L14.200 8.200" fill="none" stroke="#ccc" stroke-width="1.300"/></svg>
    <svg style="left:1060.500px;top:15.100px" width="12" height="12" viewBox="0 0 12 12"><path d="M.5 .5L11.500 11.500M11.500 .5L.5 11.500" stroke="#ccc" stroke-width="1.300"/></svg>
    <div class="term tl" style="top:48.6px"><span class="tc">请出拳（剪刀</span>/<span class="tc">石头</span>/<span class="tc">布）：布</span></div>
    <div class="term tl" style="top:70.6px"><span class="tc">平局！</span></div>
    <div class="term tl" style="top:92.6px"><span class="tc">请出拳（剪刀</span>/<span class="tc">石头</span>/<span class="tc">布）：剪刀</span></div>
    <div class="term tl" style="top:114.6px"><span class="tc">你赢了这一局！</span></div>
    <div class="term tl" style="top:136.6px"><span class="tc">请出拳（剪刀</span>/<span class="tc">石头</span>/<span class="tc">布）：石头</span></div>
    <div class="term tl" style="top:158.6px"><span class="tc">平局！</span></div>
    <div class="term tl" style="top:180.6px"><span class="tc">请出拳（剪刀</span>/<span class="tc">石头</span>/<span class="tc">布）：布</span></div>
    <div class="term tl" style="top:202.6px"><span class="tc">你赢了这一局！</span></div>
    <div class="term tl" style="top:224.6px"><span class="tc">五局三胜，最终你赢了！</span></div>
    <div class="term tl" style="top:246.6px">PS C:\Users\gaozk&gt; &amp; C:/Users/gaozk/AppData/Local/Programs/Python/Python313/python.exe Untitled-1</div>
    <div class="term tl" style="top:268.6px">C:\Users\gaozk\AppData\Local\Programs\Python\Python313\python.exe: can't open file 'C:\\Users\\gaozk</div>
    <div class="term tl" style="top:290.6px">\\Untitled-1': [Errno 2] No such file or directory</div>
    <div class="term tl" style="top:312.6px">PS C:\Users\gaozk&gt; &amp; C:/Users/gaozk/AppData/Local/Programs/Python/Python313/python.exe c:/Users/gaoz</div>
    <div class="term tl" style="top:334.6px">k/Documents/Downloads/Untitled-1.py</div>
    <div class="term tl" style="top:356.6px"><span class="tc">请输入您的身高：</span>176</div>
    <div class="term tl" style="top:378.6px"><span class="tc">请输入您的体重：</span>64</div>
    <div class="term tl" style="top:400.6px"><span class="tc">您的</span>BMI<span class="tc">指数为：</span>0.002066115702479339</div>
    <div class="term tl" style="top:422.6px"><span class="tc">体重过轻</span> ~@_@~</div>
    <div class="term tl" style="top:444.6px">PS C:\Users\gaozk&gt; 176</div>
    <div class="term tl" style="top:466.6px">176</div>
    <div class="term tl" style="top:488.6px">PS C:\Users\gaozk&gt; </div>
    <div style="left:196px;top:486.500px;width:9px;height:22px;background:#ccc"></div>
    <div style="left:926px;top:46px;width:18px;height:184px;background:#161616;border-left:1px solid #08080c;border-top:1px solid #08080c"></div>
    <div style="left:926px;top:230px;width:18px;height:280px;background:#232323;border-left:1px solid #08080c"></div>
    <div style="left:944px;top:44px;width:1px;height:470px;background:#2b2b2b"></div>
    <div style="left:945px;top:71px;width:150px;height:27px;background:#37373d;border-left:1.500px solid #2f7dd3"></div>
    <svg style="left:957px;top:46.500px" width="21" height="20" viewBox="0 0 21 20"><path d="M3.500 1.500H19.300L17.300 18.500H1.500z" fill="none" stroke="#ccc" stroke-width="1.400" stroke-linejoin="round"/><path d="M6 5.800L10.300 9L5.500 12.200M9.800 13.300H14.800" fill="none" stroke="#ccc" stroke-width="1.300"/></svg>
    <div style="left:982px;top:43.500px;height:27px;line-height:27px;font-size:16.250px;color:#ccc;white-space:nowrap">powershell</div>
    <svg style="left:958px;top:75.700px" width="19" height="19" viewBox="0 0 19 19"><rect x=".8" y=".8" width="17.400" height="17.400" rx="2.500" fill="none" stroke="#ccc" stroke-width="1.400"/><path d="M4.500 5L9.300 9L4.500 13M9.500 14H14.500" fill="none" stroke="#ccc" stroke-width="1.300"/></svg>
    <div style="left:982px;top:71px;height:27px;line-height:28.400px;font-size:16.250px;color:#ccc;white-space:nowrap">Python</div>
<!--PANEL_END-->
  </div>
</div>
</body>
</html>
